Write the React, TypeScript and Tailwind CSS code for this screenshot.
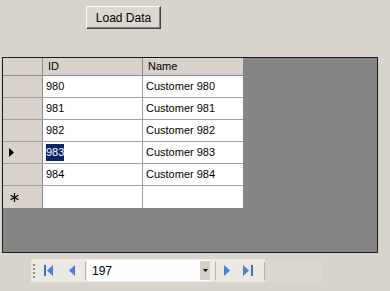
import React from 'react';

const rows = [
  { id: '980', name: 'Customer 980' },
  { id: '981', name: 'Customer 981' },
  { id: '982', name: 'Customer 982' },
  { id: '983', name: 'Customer 983', current: true },
  { id: '984', name: 'Customer 984' },
];

const FirstIcon = () => (
  <svg width="10" height="11" viewBox="0 0 10 11">
    <rect x="0" y="0" width="2" height="11" fill="#3b6fd0" />
    <path d="M9 0 L3 5.5 L9 11 Z" fill="#4a7fe0" />
  </svg>
);

const PrevIcon = () => (
  <svg width="6" height="11" viewBox="0 0 6 11">
    <path d="M6 0 L0 5.5 L6 11 Z" fill="#4a7fe0" />
  </svg>
);

const NextIcon = () => (
  <svg width="6" height="11" viewBox="0 0 6 11">
    <path d="M0 0 L6 5.5 L0 11 Z" fill="#4a7fe0" />
  </svg>
);

const LastIcon = () => (
  <svg width="10" height="11" viewBox="0 0 10 11">
    <path d="M0 0 L6 5.5 L0 11 Z" fill="#4a7fe0" />
    <rect x="8" y="0" width="2" height="11" fill="#3b6fd0" />
  </svg>
);

const App: React.FC = () => {
  return (
    <div
      className="w-[390px] h-[291px] bg-[#d8d3cb] text-[11px] text-black overflow-hidden"
      style={{ fontFamily: '"Liberation Sans", Arial, sans-serif' }}
    >
      {/* Load button */}
      <div className="pt-[6px] pl-[86px]">
        <button className="w-[75px] h-[23px] bg-[#dcd8d0] border border-t-white border-l-white border-r-[#404040] border-b-[#404040] shadow-[inset_-1px_-1px_0_#808080] text-[12px]">
          Load Data
        </button>
      </div>

      {/* Data grid */}
      <div className="mt-[28px] ml-[2px] w-[376px] h-[196px] border border-[#1a1a1a] bg-[#858585] overflow-hidden">
        <div className="w-[240px] flex flex-col bg-white">
          {/* Header */}
          <div className="flex h-[18px] bg-[#d9d2cb] border-b border-[#8a8a8a]">
            <div className="w-[40px] border-r border-[#8a8a8a]" />
            <div className="w-[100px] pl-[5px] border-r border-[#8a8a8a] flex items-center">ID</div>
            <div className="w-[100px] pl-[5px] flex items-center">Name</div>
          </div>
          {rows.map((r) => (
            <div key={r.id} className="flex h-[22px] border-b border-[#a0a0a0]">
              <div className="w-[40px] bg-[#d9d2cb] border-r border-[#8a8a8a] flex items-center pl-[6px]">
                {r.current && (
                  <svg width="5" height="9" viewBox="0 0 5 9">
                    <path d="M0 0 L5 4.5 L0 9 Z" fill="#000" />
                  </svg>
                )}
              </div>
              <div className="w-[100px] pl-[3px] border-r border-[#a0a0a0] flex items-center">
                {r.current ? <span className="bg-[#0a246a] text-white">{r.id}</span> : r.id}
              </div>
              <div className="w-[100px] pl-[3px] flex items-center">{r.name}</div>
            </div>
          ))}
          <div className="flex h-[22px]">
            <div className="w-[40px] bg-[#d9d2cb] border-r border-[#8a8a8a] flex items-center pl-[7px]">
              <svg width="9" height="9" viewBox="0 0 9 9" stroke="#000" strokeWidth="1.2">
                <line x1="4.5" y1="0" x2="4.5" y2="9" />
                <line x1="0.6" y1="2.2" x2="8.4" y2="6.8" />
                <line x1="0.6" y1="6.8" x2="8.4" y2="2.2" />
              </svg>
            </div>
            <div className="w-[100px] border-r border-[#a0a0a0]" />
            <div className="w-[100px]" />
          </div>
        </div>
      </div>

      {/* Binding navigator */}
      <div className="mt-[6px] ml-[31px] w-[291px] h-[23px] bg-[#ece9e3] flex items-center">
        <div className="w-[2px] h-[14px] ml-[2px] border-l-2 border-dotted border-[#8a8a8a]" />
        <div className="w-[22px] ml-[3px] flex justify-center"><FirstIcon /></div>
        <div className="w-[22px] ml-[1px] flex justify-center"><PrevIcon /></div>
        <div className="w-px h-[18px] bg-[#b5b1aa] ml-[2px]" />
        <div className="ml-[1px] h-[21px] w-[123px] bg-white flex items-center">
          <span className="pl-[5px] flex-1 text-[12px]">197</span>
          <div className="w-[10px] h-[19px] bg-[#d4d0c8] flex items-center justify-center">
            <svg width="5" height="3" viewBox="0 0 5 3">
              <path d="M0 0 L5 0 L2.5 3 Z" fill="#000" />
            </svg>
          </div>
        </div>
        <div className="w-px h-[18px] bg-[#b5b1aa] ml-[5px]" />
        <div className="w-[20px] ml-[1px] flex justify-center"><NextIcon /></div>
        <div className="w-[22px] flex justify-center"><LastIcon /></div>
        <div className="w-px h-[18px] bg-[#b5b1aa] ml-[5px]" />
        <div className="flex-1 h-full bg-[#dcd8d0]" />
      </div>
    </div>
  );
};

export default App;
